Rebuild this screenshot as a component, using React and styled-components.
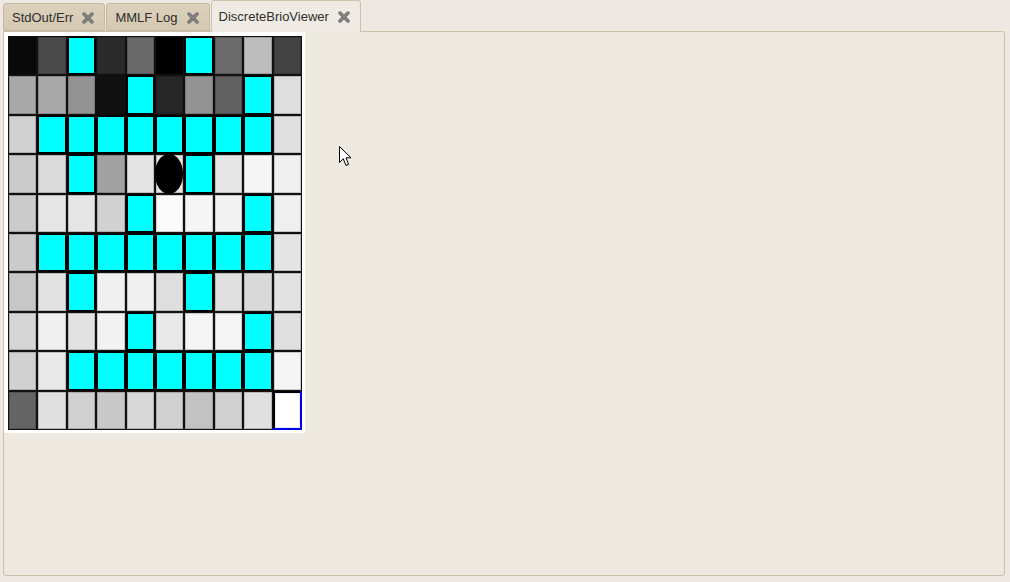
import React from 'react'
import styled, {createGlobalStyle} from 'styled-components'

const GlobalStyle = createGlobalStyle`
  html, body {
    margin: 0;
    padding: 0;
    background: #ede9e2;
    font-family: "Liberation Sans", Arial, sans-serif;
  }
`

const C = 'cyan'

// brightness of each cell, row by row
const board = [
  ['#0a0a0a', '#4a4a4a', C, '#2b2b2b', '#6a6a6a', '#000000', C, '#6b6b6b', '#bdbdbd', '#434343'],
  ['#a9a9a9', '#a9a9a9', '#939393', '#111111', C, '#272727', '#939393', '#606060', C, '#dedede'],
  ['#d1d1d1', C, C, C, C, C, C, C, C, '#e0e0e0'],
  ['#cbcbcb', '#dadada', C, '#a2a2a2', '#e4e4e4', '#e4e4e4', C, '#e6e6e6', '#f5f5f5', '#efefef'],
  ['#cbcbcb', '#e6e6e6', '#e6e6e6', '#d1d1d1', C, '#fafafa', '#f5f5f5', '#f2f2f2', C, '#efefef'],
  ['#cbcbcb', C, C, C, C, C, C, C, C, '#e4e4e4'],
  ['#c7c7c7', '#e2e2e2', C, '#f0f0f0', '#f0f0f0', '#dedede', C, '#e0e0e0', '#d9d9d9', '#e2e2e2'],
  ['#d5d5d5', '#f0f0f0', '#e2e2e2', '#f2f2f2', C, '#e8e8e8', '#f5f5f5', '#f5f5f5', C, '#e0e0e0'],
  ['#d1d1d1', '#e8e8e8', C, C, C, C, C, C, C, '#f5f5f5'],
  ['#646464', '#e0e0e0', '#d0d0d0', '#c8c8c8', '#d8d8d8', '#d0d0d0', '#c2c2c2', '#d0d0d0', '#e0e0e0', 'goal'],
]

const agent = {row: 3, col: 5}

const Page = styled.div`
  width: 1010px;
  height: 582px;
  box-sizing: border-box;
  padding: 0 5px 6px 3px;
  display: flex;
  flex-direction: column;
  position: relative;
`

const TabBar = styled.div`
  display: flex;
  align-items: flex-end;
  gap: 1px;
  height: 31px;
  position: relative;
  z-index: 2;
`

const Tab = styled.div`
  display: flex;
  align-items: center;
  gap: 9px;
  box-sizing: border-box;
  height: ${p => p.active ? '32px' : '28px'};
  margin-bottom: ${p => p.active ? '-1px' : '0'};
  padding: 0 10px 0 ${p => p.active ? '7px' : '8px'};
  font-size: 13px;
  color: #2e2e2e;
  background: ${p => p.active ? '#efebe4' : 'linear-gradient(#dcd1bd, #d5c8b0)'};
  border: 1px solid ${p => p.active ? '#cdc3ad' : '#c6b99f'};
  border-bottom: ${p => p.active ? 'none' : '1px solid #c6b99f'};
  border-radius: 3px 3px 0 0;
  padding-top: ${p => p.active ? '0' : '1px'};
`

const TabLabel = styled.span`
  white-space: nowrap;
`

const Panel = styled.div`
  flex: 1;
  border: 1px solid #cbc1aa;
  border-radius: 0 3px 3px 3px;
  background: #ede9e1;
  display: flex;
  align-items: flex-start;
`

const Canvas = styled.div`
  width: 301px;
  height: 401px;
  box-sizing: border-box;
  padding: 4px 3px 3px 4px;
  background: #ffffff;
`

const Grid = styled.div`
  display: grid;
  grid-template-columns: repeat(10, 1fr);
  grid-template-rows: repeat(10, 1fr);
  width: 294px;
  height: 394px;
  background: #000;
`

const Cell = styled.div`
  position: relative;
  background: ${p => p.goal ? '#ffffff' : p.color};
  box-shadow: ${p => p.cyan
    ? 'inset 0 0 0 2px #000'
    : p.goal
      ? 'inset -2px -2px 0 0 #0000e6, inset 2px 2px 0 0 #000, inset 0 0 0 3px #e8e8ff'
      : 'inset 0 0 0 1px #111, inset 0 0 0 2px rgba(0,0,0,0.18)'};
`

const Agent = styled.div`
  position: absolute;
  inset: 0 1px 0 0;
  border-radius: 50%;
  background: #000;
`

const Cursor = styled.svg`
  position: absolute;
  left: 339px;
  top: 146px;
`

const CloseIcon = () => (
  <svg width="12" height="12" viewBox="0 0 12 12">
    <path d="M2 2 L10 10 M10 2 L2 10" stroke="#6f6f6f" strokeWidth="3.4" strokeLinecap="round" />
    <path d="M2 2 L10 10 M10 2 L2 10" stroke="#8a8a8a" strokeWidth="1.4" strokeLinecap="round" />
  </svg>
)

const tabs = ['StdOut/Err', 'MMLF Log', 'DiscreteBrioViewer']

export default function App() {
  return (
    <Page>
      <GlobalStyle />
      <TabBar>
        {tabs.map((t, i) => (
          <Tab key={t} active={i === 2}>
            <TabLabel>{t}</TabLabel>
            <CloseIcon />
          </Tab>
        ))}
      </TabBar>
      <Panel>
        <Canvas>
          <Grid>
            {board.map((row, r) => row.map((c, k) => (
              <Cell key={r + '-' + k} color={c} cyan={c === C} goal={c === 'goal'}>
                {r === agent.row && k === agent.col && <Agent />}
              </Cell>
            )))}
          </Grid>
        </Canvas>
      </Panel>
      <Cursor width="13" height="21" viewBox="0 0 13 21">
        <path d="M0.5 0.5 L0.5 16.5 L4.3 12.8 L7 19.5 L9.6 18.4 L7 11.8 L12 11.8 Z" fill="#fff" stroke="#000" strokeWidth="1" strokeLinejoin="round" />
      </Cursor>
    </Page>
  )
}
